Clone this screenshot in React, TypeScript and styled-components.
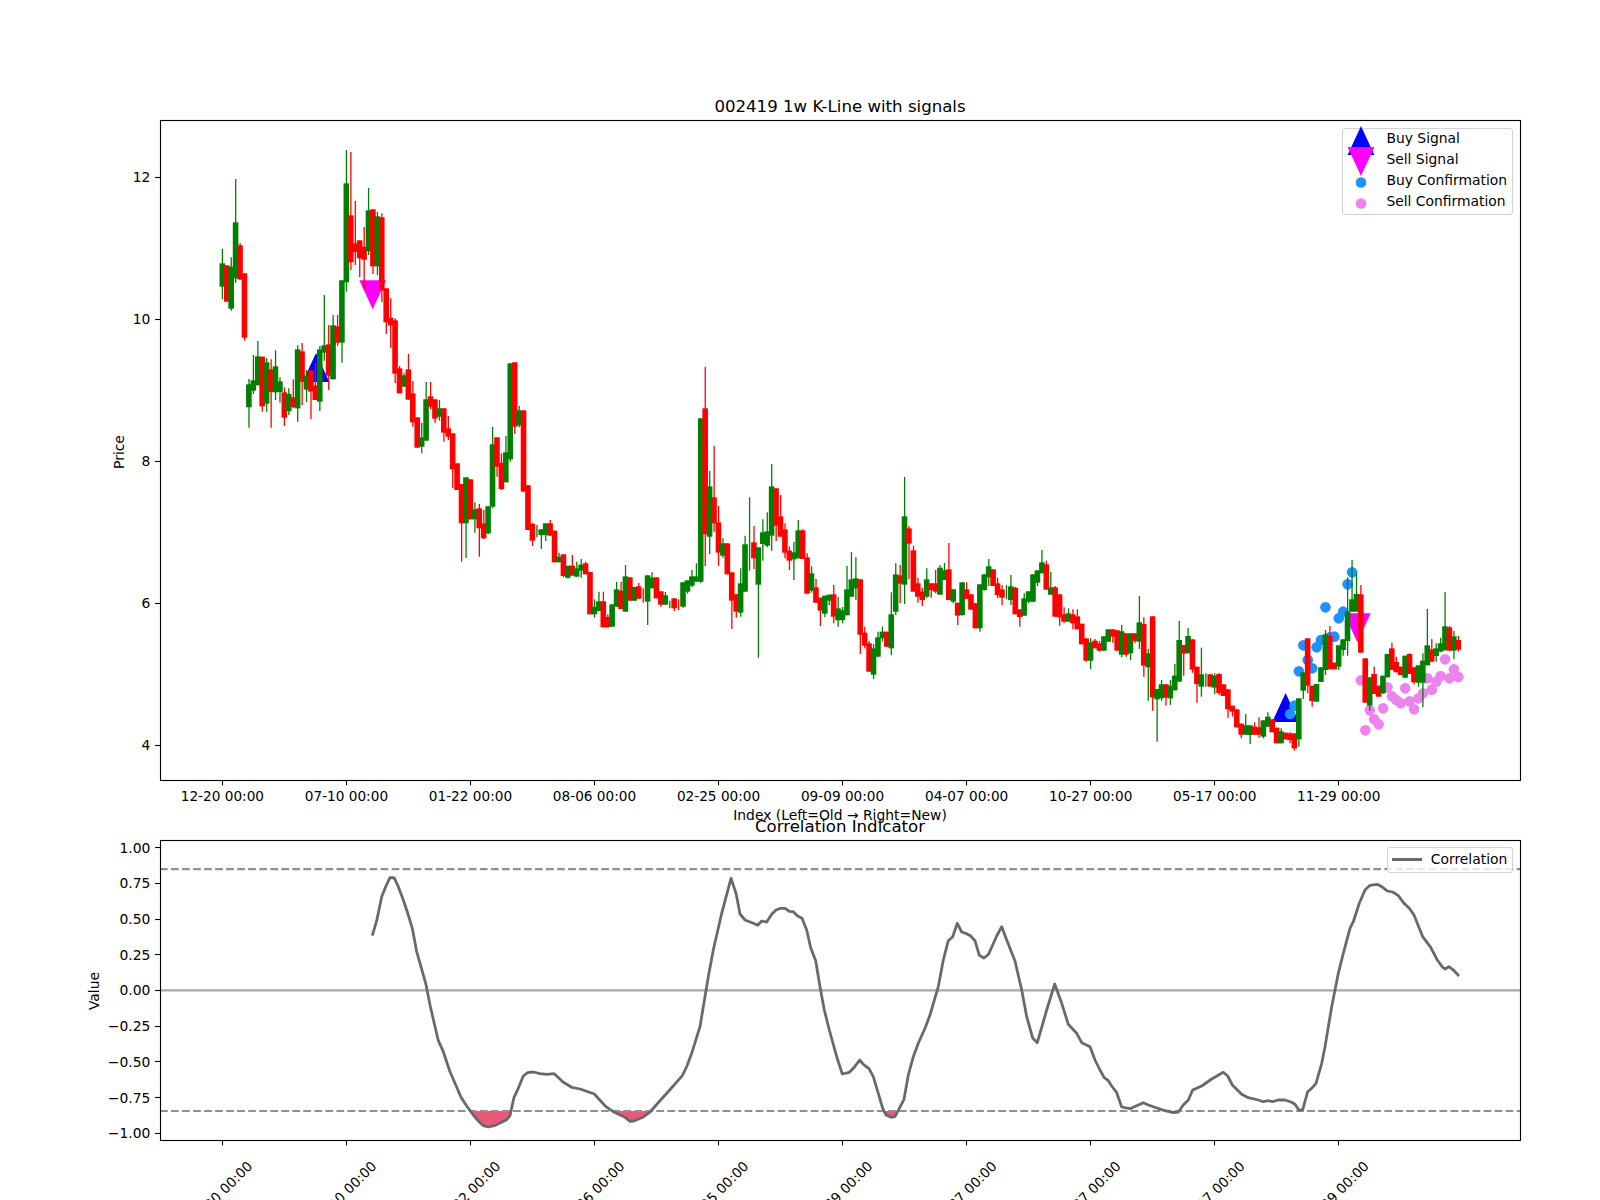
import React from "react";
import styled, { createGlobalStyle } from "styled-components";

const GlobalStyle = createGlobalStyle`
  html, body { margin: 0; padding: 0; background: #fff; }
  body { font-family: "DejaVu Sans", sans-serif; color: #000; }
`;

/* ---------- geometry ---------- */
const AX_LEFT = 160;
const AX_RIGHT = 1520;
const STEP = 4.43;
const X0 = 222.4;
const xOf = (i: number) => X0 + STEP * i;
const yOfUnit = (u: number) => 90 + u / 3;
const snap = (v: number) => Math.round(v - 0.5) + 0.5;

/* ---------- data: tone, body top, body bottom, wick top, wick bottom ---------- */
const SEG_A = `g 520 590 477 628
r 526 635 526 635
g 530 656 502 662
g 397 565 267 578
r 466 568 459 570
r 550 743 550 752
g 883 952 867 1013
g 871 902 795 912
g 799 886 753 886
r 800 949 800 965
g 817 941 805 965
r 838 906 808 1013
g 829 907 781 930
g 874 906 862 938
r 907 983 892 1008
g 912 964 895 975
r 922 951 868 955
g 778 955 766 995
r 784 875 759 945
g 858 899 840 936
r 841 905 841 987
r 886 930 820 930
g 778 935 768 963
g 766 788 615 812
r 763 857 705 900
g 706 868 675 868
r 709 758 675 767
g 571 758 571 818
g 280 577 180 605
r 376 517 186 540
r 460 486 333 525
r 451 505 451 561
r 470 509 411 597
g 361 484 294 495
r 358 529 358 552
g 379 529 366 555
r 382 601 370 636
r 595 697 595 732
r 683 706 625 773
r 691 851 685 879
r 835 910 828 910
g 856 890 850 890
r 838 929 792 929
r 910 997 873 1010
r 982 1073 982 1073
g 1042 1070 998 1090
g 928 1052 876 1052
r 919 950 876 958
r 928 986 928 998
g 955 980 930 992
r 955 1028 955 1055
r 1015 1040 978 1050
r 1030 1138 1030 1195
r 1120 1200 1120 1200
r 1182 1300 1182 1415
g 1162 1300 1162 1404
r 1168 1288 1168 1288
g 1258 1288 1237 1328
r 1255 1315 1242 1400
r 1300 1345 1260 1348
g 1249 1330 1249 1333
g 1063 1250 1011 1255
r 1042 1130 1042 1160
r 1118 1197 1090 1200
g 1087 1177 1038 1177
g 820 1108 820 1115
r 817 1010 817 1032
g 961 1006 948 1012
r 961 1205 961 1205
r 1186 1320 1186 1320
r 1302 1352 1298 1368
g 1342 1342 1305 1342
g 1318 1335 1318 1377
g 1300 1335 1300 1353
r 1300 1337 1290 1337
r 1322 1417 1322 1417
g 1400 1417 1388 1417
r 1393 1458 1393 1462
g 1427 1463 1427 1466
r 1427 1457 1395 1457
g 1435 1460 1415 1460
g 1424 1442 1407 1463
r 1420 1453 1415 1453
r 1446 1573 1446 1573
g 1550 1573 1528 1583
g 1534 1563 1505 1563
r 1534 1612 1505 1612
r 1581 1612 1573 1612
g 1543 1610 1543 1610
g 1498 1550 1476 1550
r 1502 1557 1475 1557
g 1459 1565 1425 1565
r 1462 1532 1462 1532
g 1491 1532 1491 1532
r 1489 1526 1479 1526
r 1538 1538 1495 1538
g 1456 1535 1456 1605
g 1463 1495 1447 1495
r 1462 1525 1462 1525
r 1504 1544 1504 1550
g 1516 1544 1506 1544
g 1555 1555 1532 1555
r 1525 1555 1525 1563
r 1560 1560 1528 1560
g 1477 1550 1477 1553
g 1471 1505 1471 1511
g 1459 1487 1440 1492
g 1459 1475 1420 1475`;

const SEG_B = `g 235 725 235 730
r 205 583 80 678
g 439 590 393 642
r 472 550 318 575
r 547 638 498 678
g 610 647 595 653
r 610 703 610 703
r 697 782 697 867
r 763 815 763 833
g 730 818 685 830
g 613 755 587 755
g 692 692 472 692
r 607 655 558 687
g 622 734 622 953
g 577 612 538 662
g 574 617 517 622
g 439 587 372 632
r 445 557 445 603
r 529 590 465 590
r 568 638 550 655
r 632 662 620 690
g 637 658 606 720
g 571 655 540 655
r 571 657 568 657
r 652 761 640 761
g 700 752 679 758
r 742 788 717 788
r 773 812 773 858
g 767 821 767 832
g 764 782 764 795
r 763 830 735 850
g 805 841 770 860
g 811 840 801 850
g 748 826 678 826
g 718 770 636 770
g 715 745 652 780
r 718 884 718 942
r 878 917 860 925
r 910 995 903 995
g 925 1004 912 1017
g 892 950 875 950
g 875 895 860 905
r 875 920 875 922
g 823 925 757 945
g 703 815 670 825
r 706 731 675 790
g 529 734 411 792
r 565 611 558 717
r 631 755 617 755
r 730 770 713 788
r 755 780 743 798
g 718 770 685 775
r 730 750 730 773
r 730 755 690 760
g 683 764 675 764
g 691 720 669 720
r 688 780 609 780
g 748 785 748 790
r 788 827 788 855
g 727 825 727 827
r 748 777 727 777
r 763 809 763 809
r 790 865 790 865
g 733 865 733 875
g 703 750 703 752
g 679 712 657 738
r 688 738 688 738
r 730 765 713 775
r 748 773 735 795
g 778 778 735 778
g 739 780 705 795
r 743 823 741 823
r 808 831 808 860
g 775 827 760 827
g 754 785 754 790
g 703 785 703 787
g 691 728 691 738
g 667 700 630 700
r 673 749 662 749
g 742 764 696 764
r 742 830 738 830
r 763 832 763 857
r 823 845 802 848
g 820 845 805 845
r 823 850 808 868
r 829 868 808 868
r 851 913 851 913
r 895 962 895 965
g 907 962 895 987
r 902 925 897 925
r 910 932 903 935
g 889 932 889 932
g 868 905 868 905
r 868 890 868 908
r 871 932 870 932
g 874 944 855 952
r 880 944 880 950`;

const SEG_C = `g 280 340 280 360
r 280 303 280 310
g 247 305 168 327
r 252 377 232 410
g 340 382 327 482
r 229 472 229 512
g 447 478 447 605
g 433 475 420 482
r 433 473 433 497
g 437 475 420 495
g 407 451 372 451
g 300 425 243 425
r 315 341 315 407
g 288 340 264 340
r 298 389 298 398
r 380 432 380 488
g 403 440 323 470
g 440 440 400 440
r 403 440 403 440
g 407 443 400 462
r 402 459 400 465
r 433 468 433 468
r 448 508 448 533
r 497 515 497 530
r 508 562 508 562
r 551 584 551 595
g 556 584 522 584
g 556 585 556 612
r 560 584 547 584
r 562 584 532 593
g 541 590 541 595
g 530 560 517 560
r 538 577 538 577
r 563 610 563 610
g 574 610 565 610
r 578 598 578 598
r 580 600 577 610
r 580 625 580 632
g 475 598 475 620
g 397 452 397 477
r 295 437 295 460
r 437 483 437 500
g 432 485 432 485
g 382 426 382 426
g 283 390 270 405
r 288 388 258 388
r 368 388 368 388
g 316 380 316 390
g 298 330 298 347
g 214 303 112 347
g 178 215 60 215
g 162 215 100 215
r 163 338 135 338
r 355 488 355 488
g 412 497 412 513
r 402 462 380 462
r 437 470 437 470
g 407 460 407 462
g 342 412 342 412
r 325 390 308 390
r 366 397 350 397
r 380 405 380 405
g 347 413 347 415
r 342 402 340 402
r 382 427 382 433
g 376 428 376 440
g 362 428 340 502
g 316 376 207 376
r 328 365 297 367
g 325 348 310 365
g 310 335 293 335
g 259 331 156 331
r 262 332 258 332
g 289 332 273 357
r 300 329 288 335`;

type Tone = "g" | "r";
interface Candle { tone: Tone; top: number; bottom: number; high: number; low: number; }

const parseSeg = (text: string, offset: number): Candle[] =>
  text.split("\n").map((line) => {
    const [tone, a, b, c, d] = line.trim().split(" ");
    return {
      tone: tone as Tone,
      top: yOfUnit(+a + offset),
      bottom: yOfUnit(+b + offset),
      high: yOfUnit(+c + offset),
      low: yOfUnit(+d + offset),
    };
  });

const CANDLES: Candle[] = [...parseSeg(SEG_A, 0), ...parseSeg(SEG_B, 750), ...parseSeg(SEG_C, 1350)];

const BLUE_DOTS: [number, number][] = [
  [241, 522], [242, 497], [243, 394], [244, 316], [245, 360], [246, 385], [247, 322], [248, 300],
  [249, 202], [250, 292], [251, 290], [252, 235], [253, 215], [254, 133], [255, 97],
];
const PINK_DOTS: [number, number][] = [
  [257, 421], [258, 571], [259, 511], [260, 538], [261, 553], [262, 505], [263, 442], [264, 469],
  [265, 480], [266, 490], [267, 445], [268, 484], [269, 508], [270, 475], [271, 460], [272, 415],
  [273, 449], [274, 425], [275, 408], [276, 358], [277, 415], [278, 388], [279, 411],
];

const CORR_A = [[37,257],[50,212],[65,140],[78,108],[90,83],[103,84],[115,110],[130,150],[145,195],[157,235],[170,305],[197,400],[210,465],[235,572],[250,605],[270,665],[285,700],[303,742],[320,768],[340,795],[355,813],[370,827],[385,831],[403,827],[425,817],[440,809],[450,797],[462,742],[475,715],[490,678],[503,668],[520,666],[540,671],[560,673],[583,671],[610,697],[635,712],[660,717],[703,732],[738,770],[760,785],[795,802],[810,814],[822,813],[848,802],[868,788],[900,752],[935,713],[967,677],[980,650],[995,610],[1020,530],[1030,470],[1045,380],[1060,300],[1085,190],[1113,85],[1128,130],[1140,192],[1155,210],[1180,220],[1193,226],[1205,213],[1220,216],[1235,193],[1248,180],[1262,175],[1275,175],[1288,184],[1300,185],[1312,197],[1326,205],[1340,240],[1352,293],[1367,332],[1380,410],[1393,480],[1408,540],[1430,620],[1447,672],[1465,668]];
const CORR_B = [[0,665],[14,650],[29,630],[40,643],[57,656],[70,680],[85,730],[98,775],[108,795],[123,802],[135,800],[148,775],[162,748],[175,675],[190,620],[205,580],[225,535],[240,495],[265,410],[280,330],[295,272],[308,260],[322,220],[335,246],[350,251],[362,258],[375,272],[388,316],[402,324],[415,314],[440,258],[455,230],[470,270],[495,333],[515,420],[530,500],[548,564],[562,578],[590,480],[614,402],[635,460],[655,523],[680,550],[695,578],[720,590],[735,630],[750,660],[762,682],[775,692],[785,708],[800,728],[815,771],[840,776],[880,758],[895,765],[945,782],[970,788],[985,786],[1000,765],[1015,750],[1028,720],[1055,708],[1085,687],[1120,667],[1133,678],[1147,705],[1175,733],[1195,743],[1225,750],[1240,755],[1255,752],[1268,755],[1285,750],[1305,750],[1325,757],[1335,763],[1347,781],[1358,779],[1373,725],[1385,715],[1398,700],[1415,640],[1425,590],[1445,470],[1465,370],[1480,310],[1500,235]];
const CORR_C = [[460,215],[478,160],[495,120],[510,106],[532,103],[548,112],[562,123],[578,126],[595,137],[612,160],[628,175],[642,195],[668,260],[692,292],[712,330],[728,352],[735,357],[747,350],[762,362],[777,378]];

const corrPoints = [
  ...CORR_A.map(([x, y]) => `${(360 + x / 3).toFixed(1)},${(850 + y / 3).toFixed(1)}`),
  ...CORR_B.map(([x, y]) => `${(850 + x / 3).toFixed(1)},${(850 + y / 3).toFixed(1)}`),
  ...CORR_C.map(([x, y]) => `${(1200 + x / 3).toFixed(1)},${(850 + y / 3).toFixed(1)}`),
].join(" ");

const Y_LOW = 1111;
const fillPoints = `372,${Y_LOW} ${corrPoints} 1459,${Y_LOW}`;

const X_TICKS = ["12-20 00:00", "07-10 00:00", "01-22 00:00", "08-06 00:00", "02-25 00:00", "09-09 00:00", "04-07 00:00", "10-27 00:00", "05-17 00:00", "11-29 00:00"];
const tickX = (i: number) => xOf(i * 28);

const PRICE_TICKS = [12, 10, 8, 6, 4];
const priceY = (p: number) => 177.4 + (12 - p) * 71;
const VALUE_TICKS = ["1.00", "0.75", "0.50", "0.25", "0.00", "−0.25", "−0.50", "−0.75", "−1.00"];
const valueTickY = (i: number) => 847.6 + i * 35.7;

/* ---------- page ---------- */
const Page = styled.main`
  width: 1600px;
  height: 1200px;
  padding-top: 90px;
  box-sizing: border-box;
  background: #fff;
  overflow: hidden;
  display: flex;
  flex-direction: column;
`;

const Panel = styled.section`
  position: relative;
  width: 1600px;
  flex: none;
`;

/* The axes are centred at x = 840, so the title box is offset by the 80px difference from the page centre. */
const PanelTitle = styled.h2<{ $height: number }>`
  margin: 0;
  width: 1600px;
  height: ${(p) => p.$height}px;
  flex: none;
  box-sizing: border-box;
  padding: 0 0 4.4px 80px;
  display: flex;
  align-items: flex-end;
  justify-content: center;
  font-size: 16.6px;
  font-weight: 400;
  line-height: normal;
  position: relative;
  z-index: 1;
`;

const Plot = styled.svg`
  display: block;
  overflow: visible;
`;

/* ---------- chart parts ---------- */
const Spine = styled.rect`
  fill: none;
  stroke: #000;
  stroke-width: 1.11;
`;
const Tick = styled.line`
  stroke: #000;
  stroke-width: 1.11;
`;
const Label = styled.text<{ $anchor?: string }>`
  font-family: "DejaVu Sans", sans-serif;
  font-size: 13.89px;
  fill: #000;
  text-anchor: ${(p) => p.$anchor || "middle"};
`;
const DateLabel = styled(Label)`
  font-size: 13.65px;
`;
const Wick = styled.line<{ $tone: Tone }>`
  stroke: ${(p) => (p.$tone === "g" ? "#008000" : "#ff0000")};
  stroke-width: 1.3;
`;
const Body = styled.rect<{ $tone: Tone }>`
  fill: ${(p) => (p.$tone === "g" ? "#008000" : "#ff0000")};
`;
const SignalMark = styled.polygon<{ $color: string }>`
  fill: ${(p) => p.$color};
`;
const Dot = styled.circle<{ $color: string }>`
  fill: ${(p) => p.$color};
`;
const GuideLine = styled.line<{ $dashed?: boolean }>`
  stroke: ${(p) => (p.$dashed ? "#909090" : "#a8a8a8")};
  stroke-width: 2.2;
  stroke-dasharray: ${(p) => (p.$dashed ? "7.7 3.33" : "none")};
`;
const CorrLine = styled.polyline`
  fill: none;
  stroke: #696969;
  stroke-width: 2.78;
  stroke-linejoin: round;
`;
const CorrFill = styled.polygon`
  fill: #e85b78;
`;

/* ---------- legends ---------- */
const Legend = styled.div<{ $top: number; $width: number; $height: number; $compact?: boolean }>`
  position: absolute;
  top: ${(p) => p.$top}px;
  right: 86.6px;
  width: ${(p) => p.$width}px;
  height: ${(p) => p.$height}px;
  box-sizing: border-box;
  background: rgba(255, 255, 255, 0.8);
  border: 1.1px solid #d2d2d2;
  border-radius: 3px;
  display: flex;
  flex-direction: column;
  padding-top: ${(p) => (p.$compact ? 0 : 1.3)}px;
`;
const LegendRow = styled.div<{ $compact?: boolean }>`
  height: ${(p) => (p.$compact ? 23.2 : 20.9)}px;
  flex: none;
  display: flex;
  align-items: center;
  padding-left: ${(p) => (p.$compact ? 4.1 : 0)}px;
`;
const LegendText = styled.span<{ $shift?: number }>`
  font-size: 13.89px;
  line-height: normal;
  white-space: nowrap;
  padding-bottom: ${(p) => p.$shift ?? 4.4}px;
  margin-left: 7px;
`;
const MarkerSlot = styled.svg`
  flex: none;
  overflow: visible;
`;
const LegendStroke = styled.span`
  flex: none;
  width: 30px;
  height: 2.8px;
  background: #696969;
  margin-right: 1.6px;
`;

const upTriangle = (cx: number, top: number) => `${cx},${top} ${cx + 13.4},${top + 29} ${cx - 13.4},${top + 29}`;
const downTriangle = (cx: number, top: number) => `${cx - 13.4},${top} ${cx + 13.4},${top} ${cx},${top + 29}`;

const LEGEND_ITEMS = [
  { label: "Buy Signal", mark: <SignalMark $color="#0000ff" points={upTriangle(18, 0)} /> },
  { label: "Sell Signal", mark: <SignalMark $color="#ff00ff" points={downTriangle(18, 0)} /> },
  { label: "Buy Confirmation", mark: <Dot $color="#1e90ff" cx={18} cy={14.5} r={5.3} /> },
  { label: "Sell Confirmation", mark: <Dot $color="#ee82ee" cx={18} cy={14.5} r={5.3} /> },
];

const PriceChart = () => (
  <Plot width={1600} height={695} viewBox="0 120 1600 695">
    <SignalMark $color="#0000ff" points={upTriangle(316, 353)} />
    <SignalMark $color="#0000ff" points={upTriangle(1285.6, 693)} />
    <SignalMark $color="#ff00ff" points={downTriangle(372.7, 280.3)} />
    <SignalMark $color="#ff00ff" points={downTriangle(1357.3, 613.3)} />
    {BLUE_DOTS.map(([i, v]) => (
      <Dot key={i} $color="#1e90ff" cx={xOf(i)} cy={540 + v / 3} r={5.3} />
    ))}
    {PINK_DOTS.map(([i, v]) => (
      <Dot key={i} $color="#ee82ee" cx={xOf(i)} cy={540 + v / 3} r={5.3} />
    ))}
    {CANDLES.map((c, i) => (
      <g key={i}>
        <Wick $tone={c.tone} x1={xOf(i)} x2={xOf(i)} y1={c.high} y2={c.low} />
        <Body $tone={c.tone} x={xOf(i) - 2.9} y={c.top} width={5.6} height={Math.max(c.bottom - c.top, 0)} />
      </g>
    ))}
    <Spine x={AX_LEFT + 0.5} y={120.5} width={AX_RIGHT - AX_LEFT} height={660} />
    {PRICE_TICKS.map((p) => (
      <g key={p}>
        <Tick x1={155.1} x2={AX_LEFT} y1={snap(priceY(p))} y2={snap(priceY(p))} />
        <Label $anchor="end" x={150.3} y={priceY(p) + 5}>{p}</Label>
      </g>
    ))}
    {X_TICKS.map((t, i) => (
      <g key={t}>
        <Tick x1={snap(tickX(i))} x2={snap(tickX(i))} y1={780} y2={785.4} />
        <DateLabel x={tickX(i)} y={801}>{t}</DateLabel>
      </g>
    ))}
    <Label x={840} y={820}>Index (Left=Old → Right=New)</Label>
    <Label x={124} y={452} transform="rotate(-90 124 452)">Price</Label>
  </Plot>
);

const CorrelationChart = () => (
  <Plot width={1600} height={360} viewBox="0 840 1600 360">
    <defs>
      <clipPath id="below-band">
        <rect x={AX_LEFT} y={Y_LOW} width={AX_RIGHT - AX_LEFT} height={29} />
      </clipPath>
    </defs>
    <CorrFill points={fillPoints} clipPath="url(#below-band)" />
    <GuideLine $dashed x1={AX_LEFT} x2={AX_RIGHT} y1={869.2} y2={869.2} />
    <GuideLine $dashed x1={AX_LEFT} x2={AX_RIGHT} y1={Y_LOW} y2={Y_LOW} />
    <GuideLine x1={AX_LEFT} x2={AX_RIGHT} y1={990.4} y2={990.4} />
    <CorrLine points={corrPoints} />
    <Spine x={AX_LEFT + 0.5} y={840.5} width={AX_RIGHT - AX_LEFT} height={300} />
    {VALUE_TICKS.map((t, i) => (
      <g key={t}>
        <Tick x1={155.1} x2={AX_LEFT} y1={snap(valueTickY(i))} y2={snap(valueTickY(i))} />
        <Label $anchor="end" x={150.3} y={valueTickY(i) + 5}>{t}</Label>
      </g>
    ))}
    {X_TICKS.map((t, i) => (
      <g key={t}>
        <Tick x1={snap(tickX(i))} x2={snap(tickX(i))} y1={1140} y2={1145.4} />
        <DateLabel x={tickX(i) - 2} y={1193} dy="0.36em" transform={`rotate(-45 ${tickX(i) - 2} 1193)`}>{t}</DateLabel>
      </g>
    ))}
    <Label x={99} y={991} transform="rotate(-90 99 991)">Value</Label>
  </Plot>
);

export default function App() {
  return (
    <Page>
      <GlobalStyle />
      <PanelTitle $height={30}>002419 1w K-Line with signals</PanelTitle>
      <Panel>
        <PriceChart />
        <Legend $top={7.7} $width={171} $height={87.6}>
          {LEGEND_ITEMS.map((item) => (
            <LegendRow key={item.label}>
              <MarkerSlot width={36} height={29} viewBox="0 0 36 29">{item.mark}</MarkerSlot>
              <LegendText>{item.label}</LegendText>
            </LegendRow>
          ))}
        </Legend>
      </Panel>
      <PanelTitle $height={25}>Correlation Indicator</PanelTitle>
      <Panel>
        <CorrelationChart />
        <Legend $top={7.3} $width={126.3} $height={25.4} $compact>
          <LegendRow $compact>
            <LegendStroke />
            <LegendText $shift={2}>Correlation</LegendText>
          </LegendRow>
        </Legend>
      </Panel>
    </Page>
  );
}
